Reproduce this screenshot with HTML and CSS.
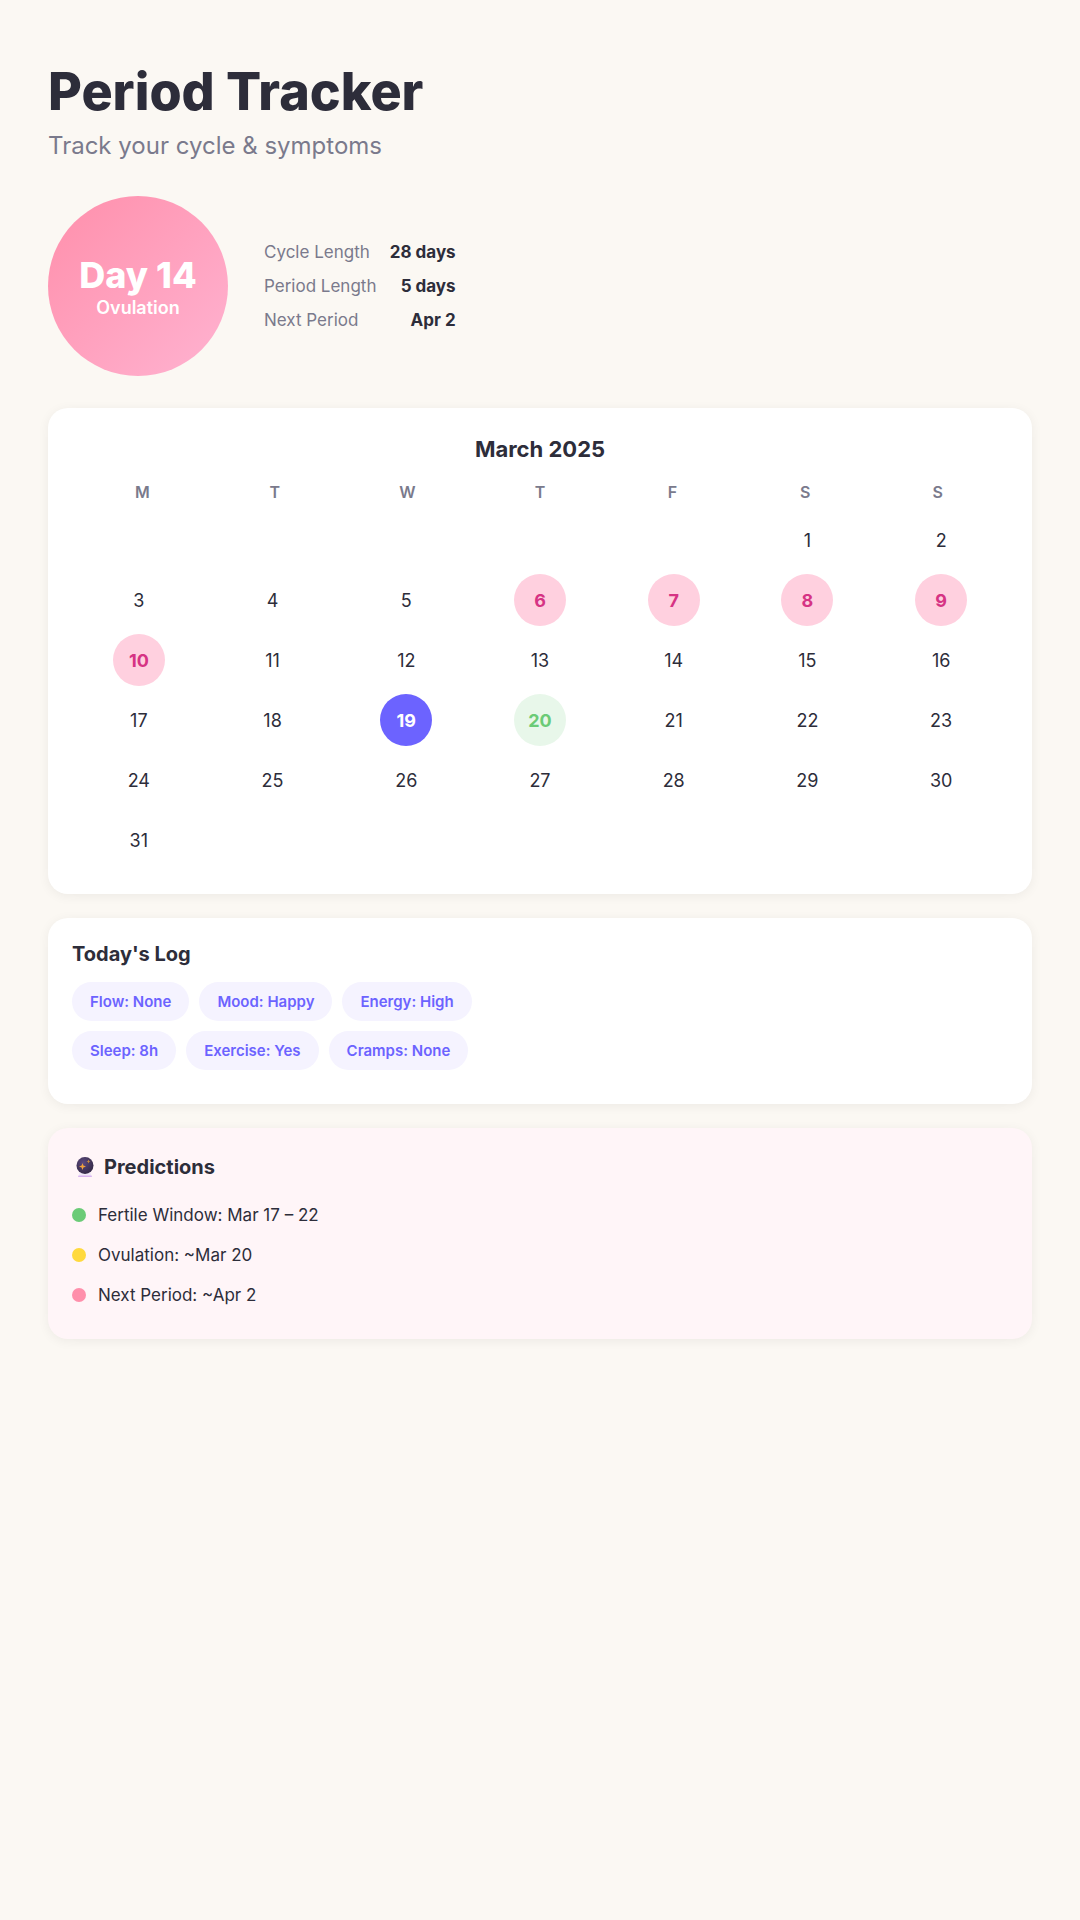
FILE: index.html
```html
<!DOCTYPE html>
<html lang="en">
<head>
    <meta charset="UTF-8">
    <meta name="viewport" content="width=device-width, initial-scale=1.0">
    <title>Period Tracker</title>
    <link rel="stylesheet" href="styles.css">
</head>
<body>

    <div class="container">
        <h1>Period Tracker</h1>
        <p class="subtitle">Track your cycle &amp; symptoms</p>

        <div class="summary">
            <div class="day-circle">
                <div class="day-number">Day 14</div>
                <div class="day-phase">Ovulation</div>
            </div>
            <div class="stats">
                <div class="stat"><span class="stat-label">Cycle Length</span><span class="stat-value">28 days</span></div>
                <div class="stat"><span class="stat-label">Period Length</span><span class="stat-value">5 days</span></div>
                <div class="stat"><span class="stat-label">Next Period</span><span class="stat-value">Apr 2</span></div>
            </div>
        </div>

        <div class="card calendar">
            <h2 class="month">March 2025</h2>
            <div class="weekdays">
                <span>M</span><span>T</span><span>W</span><span>T</span><span>F</span><span>S</span><span>S</span>
            </div>
            <div class="dates">
                <span></span><span></span><span></span><span></span><span></span>
                <span>1</span><span>2</span>
                <span>3</span><span>4</span><span>5</span>
                <span class="period">6</span><span class="period">7</span><span class="period">8</span><span class="period">9</span>
                <span class="period">10</span>
                <span>11</span><span>12</span><span>13</span><span>14</span><span>15</span><span>16</span>
                <span>17</span><span>18</span>
                <span class="today">19</span>
                <span class="fertile">20</span>
                <span>21</span><span>22</span><span>23</span>
                <span>24</span><span>25</span><span>26</span><span>27</span><span>28</span><span>29</span><span>30</span>
                <span>31</span>
            </div>
        </div>

        <div class="card log">
            <h2>Today's Log</h2>
            <div class="chip-row">
                <span class="chip">Flow: None</span>
                <span class="chip">Mood: Happy</span>
                <span class="chip">Energy: High</span>
            </div>
            <div class="chip-row">
                <span class="chip">Sleep: 8h</span>
                <span class="chip">Exercise: Yes</span>
                <span class="chip">Cramps: None</span>
            </div>
        </div>

        <div class="card predictions">
            <h2>
                <svg class="crystal" viewBox="0 0 18 20" width="18" height="20" aria-hidden="true">
                    <defs>
                        <radialGradient id="ball" cx="0.4" cy="0.35" r="0.75">
                            <stop offset="0" stop-color="#5d4a80"/>
                            <stop offset="1" stop-color="#2f2540"/>
                        </radialGradient>
                    </defs>
                    <path d="M3.500 15h11l1 4h-13z" fill="#f1e8f8"/>
                    <path d="M2.500 18.500h13l.5 1.500h-14z" fill="#d9b4f0"/>
                    <circle cx="9" cy="8.500" r="8.500" fill="url(#ball)"/>
                    <path d="M6.500 6l.9 2.600 2.600.9-2.600.9-.9 2.600-.9-2.600-2.600-.9 2.600-.9z" fill="#f2a23c"/>
                    <path d="M12.500 2.500l.6 1.400 1.400.6-1.400.6-.6 1.400-.6-1.400-1.400-.6 1.400-.6z" fill="#c98a3c"/>
                </svg>
                Predictions
            </h2>
            <ul class="prediction-list">
                <li><span class="dot green"></span>Fertile Window: Mar 17 – 22</li>
                <li><span class="dot yellow"></span>Ovulation: ~Mar 20</li>
                <li><span class="dot pink"></span>Next Period: ~Apr 2</li>
            </ul>
        </div>
    </div>

</body>
</html>
```
FILE: styles.css
```css
* {
    box-sizing: border-box;
}
body {
    margin: 0;
    min-height: 1920px;
    font-family: Inter, "Noto Sans", sans-serif;
    background-color: #fbf8f3;
    color: #2d2d3a;
}
.container {
    padding: 57px 48px 48px;
}
h1 {
    margin: 0;
    font-size: 52px;
    line-height: 70px;
    font-weight: 800;
}
.subtitle {
    margin: 4px 0 0;
    font-size: 24px;
    line-height: 29px;
    color: #7a7a8c;
}
.summary {
    display: flex;
    align-items: center;
    gap: 36px;
    margin-top: 36px;
}
.day-circle {
    width: 180px;
    height: 180px;
    border-radius: 50%;
    background: linear-gradient(135deg, #ff8fab, #ffb3d1);
    color: white;
    display: flex;
    flex-direction: column;
    align-items: center;
    justify-content: center;
}
.day-number {
    font-size: 36px;
    line-height: 40px;
    font-weight: 800;
    margin-top: 2px;
}
.day-phase {
    font-size: 18px;
    line-height: 22px;
    font-weight: 600;
    margin-top: 2px;
}
.stats {
    display: flex;
    flex-direction: column;
    gap: 14px;
}
.stat {
    display: flex;
    justify-content: space-between;
    gap: 20px;
    font-size: 17px;
    line-height: 20px;
}
.stat-label {
    color: #7a7a8c;
}
.stat-value {
    font-weight: 700;
}
.card {
    margin-top: 24px;
    padding: 24px;
    background-color: white;
    border-radius: 20px;
    box-shadow: 0 2px 12px rgba(0, 0, 0, 0.06);
}
h2 {
    margin: 0;
    font-size: 20px;
    line-height: 24px;
    font-weight: 700;
}
.calendar {
    margin-top: 32px;
    padding-bottom: 28px;
}
.month {
    font-size: 22px;
    line-height: 34px;
    text-align: center;
}
.weekdays {
    display: grid;
    grid-template-columns: repeat(7, 1fr);
    padding: 0 4px;
    margin-top: 12px;
    font-size: 16px;
    line-height: 28px;
    font-weight: 600;
    color: #7a7a8c;
    text-align: center;
}
.dates {
    display: grid;
    grid-template-columns: repeat(7, 1fr);
    grid-auto-rows: 52px;
    row-gap: 8px;
    margin-top: 8px;
    font-size: 18px;
}
.dates span {
    justify-self: center;
    width: 52px;
    height: 52px;
    border-radius: 50%;
    display: flex;
    align-items: center;
    justify-content: center;
}
.dates .period {
    background-color: #ffd0df;
    color: #d63384;
    font-weight: 700;
}
.dates .today {
    background-color: #6c63ff;
    color: white;
    font-weight: 700;
}
.dates .fertile {
    background-color: #e8f7ea;
    color: #6bcb77;
    font-weight: 700;
}
.chip-row {
    display: flex;
    gap: 10px;
    margin-bottom: 10px;
}
.log h2 {
    margin-bottom: 16px;
}
.chip {
    padding: 0 18px;
    height: 39px;
    line-height: 39px;
    border-radius: 20px;
    background-color: #f5f3ff;
    color: #6c63ff;
    font-size: 15px;
    font-weight: 600;
}
.predictions {
    background-color: #fff5f8;
}
.predictions h2 {
    display: flex;
    align-items: center;
    gap: 10px;
    padding-left: 4px;
    margin-top: 3px;
}
.prediction-list {
    list-style: none;
    margin: 16px 0 0;
    padding: 0;
}
.prediction-list li {
    display: flex;
    align-items: center;
    gap: 12px;
    height: 40px;
    font-size: 17px;
}
.dot {
    width: 14px;
    height: 14px;
    border-radius: 50%;
}
.dot.green {
    background-color: #6bcb77;
}
.dot.yellow {
    background-color: #ffd93d;
}
.dot.pink {
    background-color: #ff8fab;
}
```
